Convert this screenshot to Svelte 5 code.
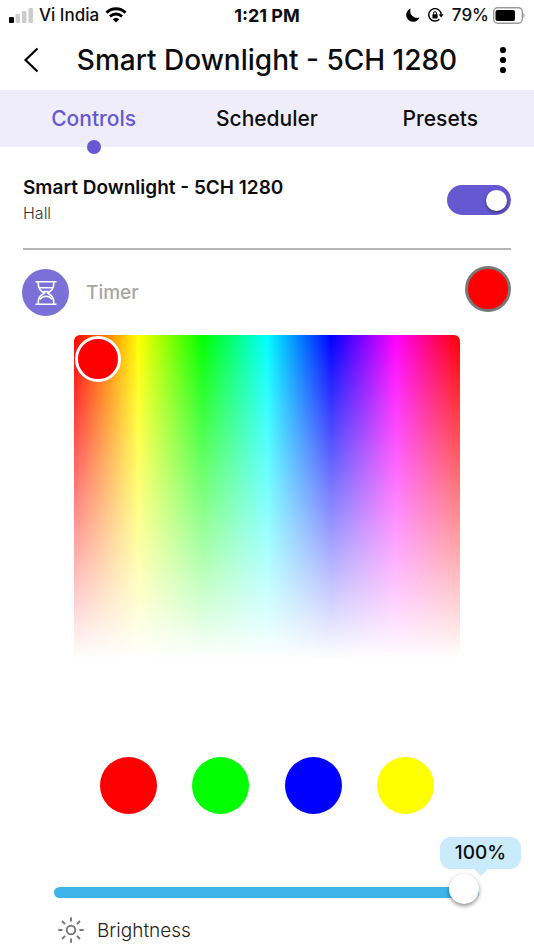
<script>
  const title = 'Smart Downlight - 5CH 1280';
  const tabs = ['Controls', 'Scheduler', 'Presets'];
  const presets = [
    { name: 'Red', color: '#ff0000' },
    { name: 'Green', color: '#00ff00' },
    { name: 'Blue', color: '#0000ff' },
    { name: 'Yellow', color: '#ffff00' }
  ];
  let active = $state('Controls');
  let power = $state(true);
  let color = $state('#ff0000');
  let brightness = $state(100);
</script>

<div class="app">
  <div class="status">
    <div class="carrier">
      <svg width="24" height="16" viewBox="0 0 24 16" aria-hidden="true">
        <rect x="0" y="10" width="5" height="6" rx="1" fill="#000" />
        <rect x="6.5" y="7" width="4.5" height="9" rx="1" fill="#ccc" />
        <rect x="13" y="4" width="4.5" height="12" rx="1" fill="#ccc" />
        <rect x="19.5" y="1" width="4.5" height="15" rx="1" fill="#ccc" />
      </svg>
      <span>Vi India</span>
      <svg width="22" height="16" viewBox="0 0 22 16" fill="none" stroke="#000" stroke-width="2.9" aria-hidden="true">
        <path d="M1.5 5.6a13.6 13.6 0 0 1 19 0" />
        <path d="M5 9.5a8.6 8.6 0 0 1 12 0" />
        <path d="M11 15.6 7.7 12.3a4.8 4.8 0 0 1 6.6 0z" fill="#000" stroke="none" />
      </svg>
    </div>
    <div class="time">1:21 PM</div>
    <div class="power">
      <svg class="moon" width="14" height="14" viewBox="0 0 14 14" aria-hidden="true">
        <path d="M4.7.5A6.900 6.900 0 1 0 13.500 9.600 7 7 0 0 1 4.700.5z" fill="#000" />
      </svg>
      <svg class="lock" width="16" height="14" viewBox="0 0 16 14" fill="none" stroke="#000" stroke-width="1.4" aria-hidden="true">
        <path d="M11.400 11.200A6.200 6.200 0 1 1 13.200 6.500" />
        <path d="M10.600 6.200h5l-2.500 3.400z" fill="#000" stroke="none" />
        <rect x="4.400" y="6.200" width="5.200" height="4.200" rx=".6" fill="#000" stroke="none" />
        <path d="M5.600 6.500V5a1.400 1.400 0 0 1 2.800 0v1.500" stroke-width="1" />
      </svg>
      <span>79%</span>
      <svg width="32" height="17" viewBox="0 0 32 17" aria-hidden="true">
        <rect x=".7" y=".7" width="28.600" height="15.600" rx="4" fill="none" stroke="#999" stroke-width="1.400" />
        <rect x="2.500" y="3" width="19.500" height="11" rx="2" fill="#000" />
        <path d="M30.400 6v5c1.600-.7 1.600-4.300 0-5z" fill="#999" />
      </svg>
    </div>
  </div>

  <header>
    <button class="icon" aria-label="Back">
      <svg width="16" height="26" viewBox="0 0 16 26" fill="none" stroke="#000" stroke-width="2.200">
        <path d="M14.500 1.500 2.500 13l12 11.500" />
      </svg>
    </button>
    <h1>{title}</h1>
    <button class="icon" aria-label="More options">
      <svg width="8" height="28" viewBox="0 0 8 28">
        <circle cx="4" cy="4" r="3.100" />
        <circle cx="4" cy="14" r="3.100" />
        <circle cx="4" cy="24" r="3.100" />
      </svg>
    </button>
  </header>

  <nav>
    {#each tabs as tab}
      <button class="tab" class:active={tab === active} onclick={() => (active = tab)}>{tab}</button>
    {/each}
  </nav>

  <main>
    <section class="device">
      <div>
        <h2>{title}</h2>
        <p>Hall</p>
      </div>
      <input class="switch" type="checkbox" role="switch" aria-label="Power" bind:checked={power} />
    </section>

    <section class="timer">
      <button class="timer-button">
        <span class="timer-icon">
          <svg width="22" height="26" viewBox="0 0 22 26" fill="none" stroke="#fff" stroke-width="1.600">
            <path d="M.5 1.700h21M.5 24.300h21" />
            <path d="M3.300 1.700V4c0 5 2.200 6.500 6 9-3.800 2.500-6 4-6 9v2.300M18.700 1.700V4c0 5-2.200 6.500-6 9 3.800 2.500 6 4 6 9v2.300" />
            <path d="M4.500 7.700h13M8.500 11.500h5M5 19.300c1.500-2.300 3.800-3 6-3s4.500.7 6 3" />
          </svg>
        </span>
        <span>Timer</span>
      </button>
      <button class="current" style:background={color} aria-label="Current colour"></button>
    </section>

    <div class="picker">
      <button class="pin" style:background={color} aria-label="Selected colour"></button>
    </div>

    <div class="presets">
      {#each presets as p}
        <button style:background={p.color} aria-label={p.name} onclick={() => (color = p.color)}></button>
      {/each}
    </div>

    <section class="brightness">
      <output for="level">{brightness}%</output>
      <input id="level" type="range" min="0" max="100" bind:value={brightness} style:--level="{brightness}%" />
      <label for="level">
        <svg width="26" height="26" viewBox="0 0 26 26" fill="none" stroke="#777" stroke-width="1.900" aria-hidden="true">
          <circle cx="13" cy="13" r="4.300" />
          <path d="M13 .3v4.200M13 21.500v4.200M.3 13h4.200M21.500 13h4.200M4 4l3.100 3.100M18.900 18.900 22 22M4 22l3.100-3.100M18.900 7.100 22 4" />
        </svg>
        Brightness
      </label>
    </section>
  </main>
</div>

<style>
  :global(body) {
    background: #fff;
  }
  .app {
    font-family: Inter, 'Liberation Sans', sans-serif;
    color: #0c0c0e;
  }
  .app * {
    box-sizing: border-box;
  }
  button {
    font: inherit;
    color: inherit;
    padding: 0;
    border: 0;
    background: none;
    cursor: pointer;
  }
  svg {
    display: block;
    flex: none;
  }
  h1,
  h2,
  p {
    margin: 0;
  }

  .status {
    display: grid;
    grid-template-columns: 1fr auto 1fr;
    align-items: center;
    height: 30px;
    padding: 0 9px;
    font-size: 17px;
    font-weight: 500;
  }
  .carrier,
  .power {
    display: flex;
    align-items: center;
    gap: 6px;
  }
  .power {
    justify-content: flex-end;
    gap: 4px;
  }
  .moon,
  .lock {
    margin-right: 4px;
  }
  .time {
    font-size: 18px;
    font-weight: 700;
  }

  header {
    display: flex;
    align-items: center;
    justify-content: space-between;
    height: 60px;
    padding: 0 16px;
  }
  .icon {
    display: grid;
    place-items: center;
    width: 30px;
    height: 44px;
  }
  h1 {
    font-size: 28px;
    font-weight: 500;
    white-space: nowrap;
  }

  nav {
    display: grid;
    grid-template-columns: repeat(3, 1fr);
    padding: 0 7px;
    background: #f0edfb;
  }
  .tab {
    position: relative;
    height: 57px;
    font-size: 21px;
    font-weight: 500;
  }
  .tab.active {
    color: #6558d1;
  }
  .tab.active::after {
    content: '';
    position: absolute;
    left: 50%;
    bottom: -7px;
    width: 14px;
    height: 14px;
    margin-left: -7px;
    border-radius: 50%;
    background: #6558d1;
  }

  .device {
    display: flex;
    align-items: center;
    justify-content: space-between;
    margin: 0 23px;
    padding: 28px 0 23px;
    border-bottom: 2px solid #b3b3b8;
  }
  h2 {
    font-size: 19px;
    font-weight: 600;
    line-height: 26px;
  }
  .device p {
    font-size: 16px;
    font-weight: 300;
    line-height: 24px;
    color: #333;
  }
  .switch {
    appearance: none;
    display: flex;
    align-items: center;
    width: 64px;
    height: 30px;
    margin: 0;
    padding: 0 4px;
    border-radius: 15px;
    background: #bbb;
    cursor: pointer;
  }
  .switch:checked {
    justify-content: flex-end;
    background: #6558d1;
  }
  .switch::before {
    content: '';
    width: 21px;
    height: 21px;
    border-radius: 50%;
    background: #fff;
    box-shadow: 0 2px 3px rgb(0 0 0 / 0.4);
  }

  .timer {
    display: flex;
    align-items: flex-start;
    justify-content: space-between;
    margin: 0 23px 0 22px;
    padding: 16px 0 19px;
  }
  .timer-button {
    display: flex;
    align-items: center;
    gap: 17px;
    margin-top: 3px;
    font-size: 19px;
    font-weight: 500;
    color: #a5a5a5;
  }
  .timer-icon {
    display: grid;
    place-items: center;
    width: 47px;
    height: 47px;
    border-radius: 50%;
    background: #7a70d7;
  }
  .current {
    width: 46px;
    height: 46px;
    border: 3px solid #777;
    border-radius: 50%;
  }

  .picker {
    height: 325px;
    margin: 0 74px;
    padding: 1px;
    border-radius: 6px;
    background:
      linear-gradient(to bottom, rgb(255 255 255 / 0), #fff),
      linear-gradient(to right, #f00, #ff0, #0f0, #0ff, #00f, #f0f, #f00);
  }
  .pin {
    display: block;
    width: 46px;
    height: 46px;
    border: 3px solid #fff;
    border-radius: 50%;
  }

  .presets {
    display: flex;
    justify-content: space-between;
    margin: 97px 100px 0;
  }
  .presets button {
    width: 57px;
    height: 57px;
    border-radius: 50%;
  }

  .brightness {
    display: flex;
    flex-direction: column;
    margin: 23px 55px 0 54px;
  }
  output {
    position: relative;
    align-self: flex-end;
    width: 81px;
    margin-right: -42px;
    border-radius: 11px;
    background: #c9ebfc;
    font-size: 19px;
    font-weight: 500;
    line-height: 32px;
    text-align: center;
  }
  output::after {
    content: '';
    position: absolute;
    top: 100%;
    left: 50%;
    margin-left: -7px;
    border: 7px solid transparent;
    border-bottom: 0;
    border-top-color: #c9ebfc;
  }
  input[type='range'] {
    appearance: none;
    width: 100%;
    height: 30px;
    margin: 8px 0 0;
    background: none;
  }
  input[type='range']::-webkit-slider-runnable-track {
    height: 11px;
    border-radius: 6px;
    background: linear-gradient(to right, #3eb3ea var(--level), #ddd var(--level));
  }
  input[type='range']::-webkit-slider-thumb {
    appearance: none;
    width: 30px;
    height: 30px;
    margin-top: -13px;
    border-radius: 50%;
    background: #fff;
    box-shadow: 0 2px 4px rgb(0 0 0 / 0.45);
  }
  label {
    display: flex;
    align-items: center;
    gap: 13px;
    padding: 10px 4px 7px;
    font-size: 19px;
    font-weight: 300;
    color: #222;
  }
</style>
